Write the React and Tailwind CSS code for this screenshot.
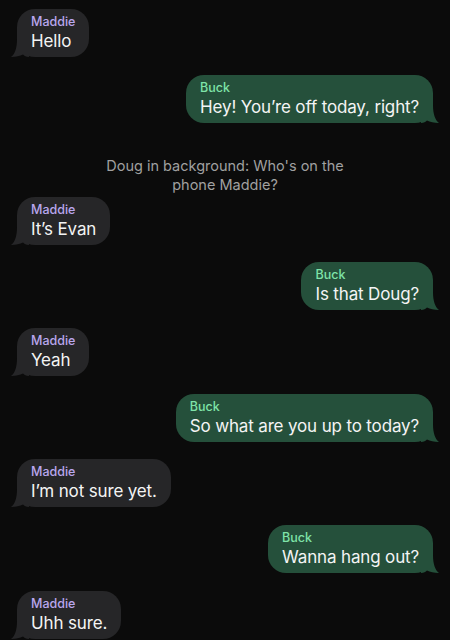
import React from "react";

const messages = [
  { from: "Maddie", text: "Hello" },
  { from: "Buck", text: "Hey! You\u2019re off today, right?" },
  { system: "Doug in background: Who's on the phone Maddie?" },
  { from: "Maddie", text: "It\u2019s Evan" },
  { from: "Buck", text: "Is that Doug?" },
  { from: "Maddie", text: "Yeah" },
  { from: "Buck", text: "So what are you up to today?" },
  { from: "Maddie", text: "I\u2019m not sure yet." },
  { from: "Buck", text: "Wanna hang out?" },
  { from: "Maddie", text: "Uhh sure." },
];

const Tail = ({ mine, color }) => (
  <svg
    width="18"
    height="18"
    viewBox="0 0 18 18"
    className={
      mine
        ? "absolute bottom-0 right-[-6px] -scale-x-100"
        : "absolute bottom-0 left-[-6px]"
    }
  >
    <path
      d="M6 0 C6 9 4 15 0 18 C5 18 9 17 12 15.5 C13.5 17 15 18 18 18 L18 0 Z"
      fill={color}
    />
  </svg>
);

const Bubble = ({ from, text }) => {
  const mine = from === "Buck";
  const color = mine ? "#25503b" : "#262628";
  return (
    <div className={mine ? "flex justify-end" : "flex justify-start"}>
      <div
        className={
          "relative rounded-[18px] px-[14px] pt-[5px] pb-[5px] " +
          (mine ? "bg-[#25503b]" : "bg-[#262628]")
        }
      >
        <Tail mine={mine} color={color} />
        <div
          className={
            "relative text-[12.5px] leading-[16px] font-medium " +
            (mine ? "text-[#7fe3a8]" : "text-[#b9a7ee]")
          }
        >
          {from}
        </div>
        <div className="relative text-[17px] leading-[22px] tracking-[-0.15px] text-[#f4f4f4] whitespace-nowrap">
          {text}
        </div>
      </div>
    </div>
  );
};

export default function App() {
  return (
    <div
      className="h-[640px] overflow-hidden bg-[#0b0b0b] px-[17px] pt-[9px]"
      style={{ fontFamily: "Inter, 'Noto Sans', sans-serif" }}
    >
      {messages.map((m, i) => {
        const prevSystem = i > 0 && messages[i - 1].system;
        if (m.system) {
          return (
            <div
              key={i}
              className="mt-[33.6px] mx-auto max-w-[256px] text-center text-[14.5px] leading-[19px] text-[#a0a0a0]"
            >
              {m.system}
            </div>
          );
        }
        return (
          <div
            key={i}
            className={i === 0 ? "" : prevSystem ? "mt-[2.4px]" : "mt-[17.67px]"}
          >
            <Bubble from={m.from} text={m.text} />
          </div>
        );
      })}
    </div>
  );
}
